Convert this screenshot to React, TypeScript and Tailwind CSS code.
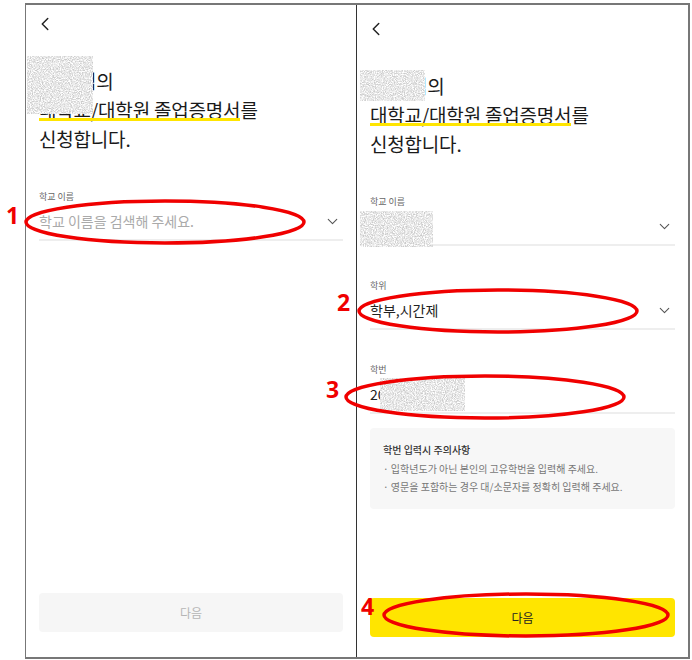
import { ChevronDown, ChevronLeft } from 'lucide-react'

const FONT = "font-['Noto_Sans_CJK_KR','Noto_Sans',sans-serif]"

// 개인정보 가림 처리 (노이즈)
function Smudge({ className, seed }: { className: string; seed: number }) {
  const id = `noise-${seed}`
  return (
    <svg className={`absolute ${className}`} preserveAspectRatio="none">
      <filter id={id} x="0" y="0" width="100%" height="100%">
        <feTurbulence type="fractalNoise" baseFrequency="0.9" numOctaves="2" seed={seed} />
        <feColorMatrix values="0 0 0 0 0.6  0 0 0 0 0.6  0 0 0 0 0.6  2.4 0 0 0 -0.75" />
      </filter>
      <rect width="100%" height="100%" fill="#fff" />
      <rect width="100%" height="100%" filter={`url(#${id})`} />
    </svg>
  )
}

function Heading() {
  return (
    <h1 className="text-[19px] leading-[29px] text-[#1a1a1a] font-normal tracking-[-0.2px]">
      <div className="pl-[40px]">님의</div>
      <div>
        <span className="relative inline-block">
          대학교/대학원 졸업증명서
          <span className="absolute left-0 right-0 bottom-[3px] h-[3px] bg-[#ffe500]" />
        </span>
        를
      </div>
      <div>신청합니다.</div>
    </h1>
  )
}

function Field({
  label,
  value,
  placeholder,
  select = true,
}: {
  label: string
  value?: string
  placeholder?: string
  select?: boolean
}) {
  return (
    <div>
      <div className="text-[9px] leading-[12px] text-[#666]">{label}</div>
      <div className="mt-[7px] h-[31px] flex items-center justify-between border-b-2 border-[#eeeeee] pb-[6px]">
        <span className={`text-[14px] ${placeholder ? 'text-[#aaaaaa]' : 'text-[#222]'}`}>
          {value ?? placeholder}
        </span>
        {select && <ChevronDown className="w-[17px] h-[17px] mr-[2px] text-[#555]" strokeWidth={1.5} />}
      </div>
    </div>
  )
}

export default function App() {
  return (
    <div className={`relative w-[692px] h-[660px] bg-white overflow-hidden ${FONT}`}>
      <div className="absolute left-[25px] top-[3px] w-[665px] h-[656px] flex border-2 border-[#777] border-l-[1.5px] bg-white">
        {/* 왼쪽 화면 */}
        <div className="w-[331px] h-full flex flex-col px-[13px] border-r-[1.5px] border-[#333]">
          <ChevronLeft className="w-[22px] h-[22px] -ml-[5px] mt-[8px] text-[#222]" strokeWidth={1.6} />
          <div className="mt-[31px]">
            <Heading />
          </div>
          <div className="mt-[38px]">
            <Field label="학교 이름" placeholder="학교 이름을 검색해 주세요." />
          </div>
          <button className="mt-auto mb-[25px] h-[39px] rounded-[4px] bg-[#f6f6f6] text-[12px] text-[#b5b5b5]">
            다음
          </button>
        </div>

        {/* 오른쪽 화면 */}
        <div className="flex-1 h-full flex flex-col pl-[13px] pr-[13px]">
          <ChevronLeft className="w-[22px] h-[22px] -ml-[5px] mt-[13px] text-[#222]" strokeWidth={1.6} />
          <div className="mt-[31px]">
            <Heading />
          </div>
          <div className="mt-[38px] flex flex-col gap-[34px]">
            <Field label="학교 이름" value="            학교" />
            <Field label="학위" value="학부,시간제" />
            <Field label="학번" value="20" select={false} />
          </div>
          <div className="mt-[14px] h-[81px] rounded-[4px] bg-[#f7f7f7] px-[13px] pt-[14px] text-[10px] leading-[18px] text-[#777]">
            <div className="font-medium text-[#333] leading-[16px] mb-[2px]">학번 입력시 주의사항</div>
            <div>· 입학년도가 아닌 본인의 고유학번을 입력해 주세요.</div>
            <div>· 영문을 포함하는 경우 대/소문자를 정확히 입력해 주세요.</div>
          </div>
          <button className="mt-auto mb-[20px] h-[39px] rounded-[4px] bg-[#ffe500] text-[12px] text-[#222]">
            다음
          </button>
        </div>
      </div>

      {/* 가림 처리 */}
      <Smudge seed={1} className="left-[27px] top-[56px] w-[66px] h-[58px]" />
      <Smudge seed={2} className="left-[360px] top-[70px] w-[65px] h-[31px]" />
      <Smudge seed={3} className="left-[360px] top-[211px] w-[73px] h-[36px]" />
      <Smudge seed={4} className="left-[380px] top-[378px] w-[85px] h-[33px]" />

      {/* 빨간 표시 */}
      <svg className="absolute inset-0 w-[692px] h-[660px] pointer-events-none" fill="none" stroke="#f00000" strokeWidth="3.5">
        <ellipse cx="165" cy="222" rx="139" ry="21" />
        <ellipse cx="498" cy="311" rx="139" ry="21" />
        <ellipse cx="485" cy="397" rx="139" ry="21" />
        <ellipse cx="526" cy="615" rx="142" ry="21" />
      </svg>
      <span className="absolute left-[6px] top-[198px] text-[23px] font-bold text-[#f00000] font-['Open_Sans',sans-serif]">1</span>
      <span className="absolute left-[337px] top-[285px] text-[23px] font-bold text-[#f00000] font-['Open_Sans',sans-serif]">2</span>
      <span className="absolute left-[326px] top-[372px] text-[23px] font-bold text-[#f00000] font-['Open_Sans',sans-serif]">3</span>
      <span className="absolute left-[361px] top-[589px] text-[23px] font-bold text-[#f00000] font-['Open_Sans',sans-serif]">4</span>
    </div>
  )
}
